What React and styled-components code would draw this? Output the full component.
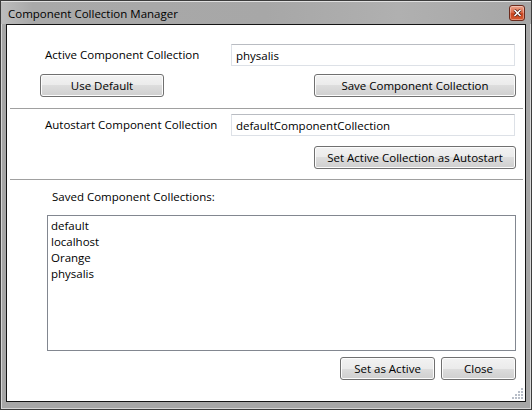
import React from "react";
import styled, { createGlobalStyle } from "styled-components";

const GlobalStyle = createGlobalStyle`
    body {
        margin: 0;
        background: #ffffff;
        font-family: "Open Sans", "Noto Sans", sans-serif;
    }
`;

const Window = styled.div`
    width: 532px;
    height: 410px;
    box-sizing: border-box;
    display: flex;
    flex-direction: column;
    border: 1px solid #3c3c3c;
    background: #a6a6a6;
    box-shadow: inset 0 0 0 1px #d6d6d6;
    padding: 0 5px 7px 5px;
`;

const TitleBar = styled.div`
    height: 23px;
    margin: 0 -5px;
    padding: 0 6px 0 7px;
    display: flex;
    align-items: center;
    justify-content: space-between;
    background: linear-gradient(90deg, #bdbdbd 0%, #a9a9a9 6%, #a7a7a7 50%, #b0b0b0 75%, #a6a6a6 100%);
    border-top: 1px solid #e0e0e0;
    box-sizing: border-box;
`;

const Title = styled.span`
    font-size: 11.5px;
    color: #000;
`;

const CloseButton = styled.div`
    width: 16px;
    height: 16px;
    box-sizing: border-box;
    border: 1px solid #6b2a1c;
    border-radius: 3px;
    background: linear-gradient(#eba58e 0%, #df6c4a 45%, #c9431d 55%, #d75a30 100%);
    box-shadow: inset 0 0 0 1px rgba(255, 255, 255, 0.35);
    display: flex;
    align-items: center;
    justify-content: center;
`;

const Client = styled.div`
    flex: 1;
    display: flex;
    flex-direction: column;
    border: 1px solid #141414;
    background: #ffffff;
    font-size: 11.5px;
    color: #000;
`;

const FieldRow = styled.div`
    display: grid;
    grid-template-columns: 186px 284px;
    align-items: center;
    padding-left: 38px;
    margin-top: ${({ $top }) => $top}px;
`;

const Label = styled.span`
    line-height: 16px;
`;

const TextBox = styled.div`
    height: 22px;
    box-sizing: border-box;
    border: 1px solid #dde1e7;
    border-top-color: #b9bcc2;
    padding-left: 4px;
    display: flex;
    align-items: center;
`;

const ButtonRow = styled.div`
    display: flex;
    justify-content: ${({ $split }) => ($split ? "space-between" : "flex-end")};
    gap: 6px;
    padding: 0 9px 0 33px;
    margin-top: ${({ $top }) => $top}px;
`;

const Button = styled.div`
    width: ${({ $w }) => $w}px;
    height: 23px;
    box-sizing: border-box;
    border: 1px solid #707070;
    border-radius: 3px;
    background: linear-gradient(#f2f2f2 0%, #ebebeb 50%, #dddddd 50%, #cfcfcf 100%);
    box-shadow: inset 0 0 0 1px #fcfcfc;
    display: flex;
    align-items: center;
    justify-content: center;
    line-height: 16px;
`;

const Separator = styled.div`
    height: 1px;
    background: #a0a0a0;
    margin: ${({ $top }) => $top}px 2px 0 3px;
`;

const SectionLabel = styled.div`
    line-height: 16px;
    padding-left: 45px;
    margin-top: 9px;
`;

const ListBox = styled.div`
    height: 136px;
    box-sizing: border-box;
    margin: 10px 9px 0 40px;
    border: 1px solid #828790;
    padding: 2px 3px;
    display: flex;
    flex-direction: column;
`;

const ListItem = styled.div`
    line-height: 16px;
`;

const Footer = styled.div`
    margin-top: auto;
    display: flex;
    justify-content: flex-end;
    padding: 0 1px 1px 0;
`;

const items = ["default", "localhost", "Orange", "physalis"];

const Grip = () => {
    const dots = [
        [9, 0],
        [6, 3], [9, 3],
        [3, 6], [6, 6], [9, 6],
        [0, 9], [3, 9], [6, 9], [9, 9],
    ];
    return (
        <svg width="12" height="12" viewBox="0 0 12 12">
            {dots.map(([x, y]) => (
                <g key={`${x}-${y}`}>
                    <rect x={x + 1} y={y + 1} width="2" height="2" fill="#ffffff" />
                    <rect x={x} y={y} width="2" height="2" fill="#b8bec8" />
                </g>
            ))}
        </svg>
    );
};

const App = () => {
    return (
        <>
            <GlobalStyle />
            <Window>
                <TitleBar>
                    <Title>Component Collection Manager</Title>
                    <CloseButton>
                        <svg width="9" height="8" viewBox="0 0 9 8">
                            <path d="M1.5 1 L7.5 7 M7.5 1 L1.5 7" stroke="#4a1a10" strokeWidth="3" />
                            <path d="M1.5 1 L7.5 7 M7.5 1 L1.5 7" stroke="#ffffff" strokeWidth="1.6" />
                        </svg>
                    </CloseButton>
                </TitleBar>
                <Client>
                    <FieldRow $top={19}>
                        <Label>Active Component Collection</Label>
                        <TextBox>physalis</TextBox>
                    </FieldRow>
                    <ButtonRow $split $top={8}>
                        <Button $w={124}>Use Default</Button>
                        <Button $w={202}>Save Component Collection</Button>
                    </ButtonRow>
                    <Separator $top={11} />
                    <FieldRow $top={5}>
                        <Label>Autostart Component Collection</Label>
                        <TextBox>defaultComponentCollection</TextBox>
                    </FieldRow>
                    <ButtonRow $top={10}>
                        <Button $w={202}>Set Active Collection as Autostart</Button>
                    </ButtonRow>
                    <Separator $top={10} />
                    <SectionLabel>Saved Component Collections:</SectionLabel>
                    <ListBox>
                        {items.map((item) => (
                            <ListItem key={item}>{item}</ListItem>
                        ))}
                    </ListBox>
                    <ButtonRow $top={6}>
                        <Button $w={95}>Set as Active</Button>
                        <Button $w={75}>Close</Button>
                    </ButtonRow>
                    <Footer>
                        <Grip />
                    </Footer>
                </Client>
            </Window>
        </>
    );
};

export default App;
